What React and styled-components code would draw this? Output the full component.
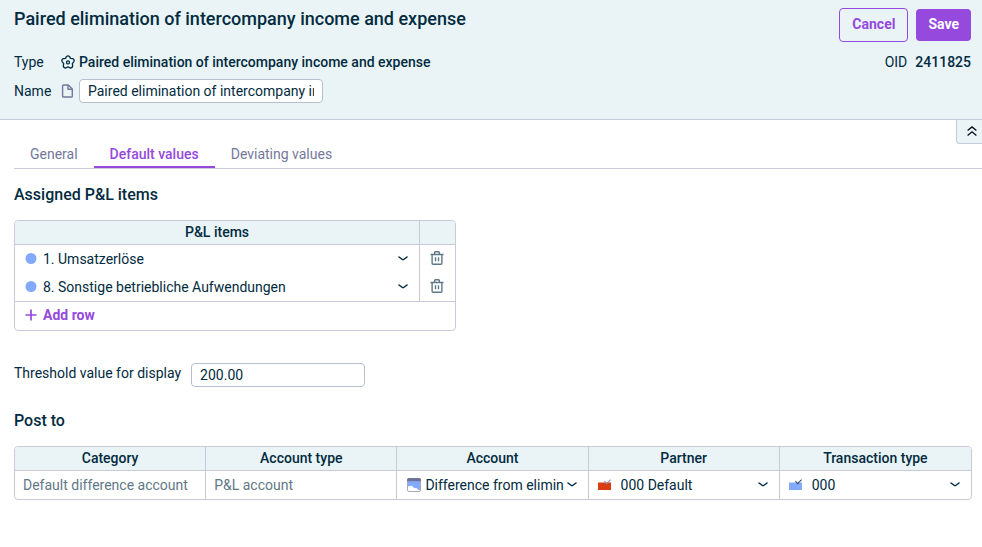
import { useState } from 'react'
import styled, { createGlobalStyle, ThemeProvider } from 'styled-components'

const theme = {
	text: '#022b40',
	muted: '#5f7886',
	tab: '#74789b',
	primary: '#9549dd',
	panel: '#eaf4f7',
	border: '#c8cada',
	headerBorder: '#c3cbd8',
	inputBorder: '#b6bfcf',
	blue: '#83aafa',
	red: '#d93d14',
}

const GlobalStyle = createGlobalStyle`
    * {
        box-sizing: border-box;
    }

    body {
        margin: 0;
        background-color: #fff;
        color: ${theme.text};
        font-family: Roboto, 'Liberation Sans', sans-serif;
        font-size: 14px;
        line-height: 20px;
    }

    button, input, select {
        font: inherit;
        color: inherit;
        margin: 0;
    }
`

const Header = styled.header`
    background-color: ${props => props.theme.panel};
    border-bottom: 1px solid ${props => props.theme.headerBorder};
    padding: 8px 11px 13px 14px;
`

const HeaderRow = styled.div`
    display: flex;
    justify-content: space-between;
    align-items: flex-start;
    margin-bottom: 6px;
`

const Title = styled.h1`
    margin: 0;
    font-size: 18px;
    font-weight: 500;
    line-height: 22px;
`

const ButtonGroup = styled.div`
    display: flex;
    align-items: center;
    gap: 8px;
`

const Button = styled.button`
    height: ${props => props.$primary ? '32px' : '34px'};
    padding: 0 12px 2px;
    border: ${props => props.$primary ? '0' : `1px solid ${props.theme.primary}`};
    border-radius: 4px;
    background-color: ${props => props.$primary ? props.theme.primary : 'transparent'};
    color: ${props => props.$primary ? '#fff' : props.theme.primary};
    font-weight: 700;
    cursor: pointer;
`

const MetaRow = styled.div`
    display: flex;
    align-items: center;
    height: ${props => props.$tall ? '30px' : '28px'};
`

const MetaLabel = styled.label`
    width: 47px;
`

const IconSlot = styled.span`
    display: flex;
    flex: none;
    width: ${props => props.$width || 18}px;
`

const Strong = styled.span`
    font-weight: 500;
`

const Oid = styled.div`
    display: flex;
    gap: 8px;
    margin-left: auto;
`

const TextInput = styled.input`
    width: ${props => props.$width}px;
    height: 24px;
    padding: 0 8px;
    border: 1px solid ${props => props.theme.inputBorder};
    border-radius: 4px;
    background-color: #fff;
`

const CollapseBar = styled.div`
    display: flex;
    justify-content: flex-end;
    height: 24px;
`

const CollapseButton = styled.button`
    display: flex;
    align-items: center;
    justify-content: center;
    width: 26px;
    padding: 0 0 2px 4px;
    border: solid ${props => props.theme.headerBorder};
    border-width: 0 0 1px 1px;
    border-radius: 0 0 0 4px;
    background-color: ${props => props.theme.panel};
    cursor: pointer;
`

const Tabs = styled.div.attrs({ role: 'tablist' })`
    display: flex;
    margin-left: 14px;
    border-bottom: 1px solid ${props => props.theme.border};
`

const Tab = styled.button.attrs({ role: 'tab' })`
    height: 24px;
    padding: 0 16px 2px;
    border: 0;
    border-bottom: 2px solid ${props => props.$active ? props.theme.primary : 'transparent'};
    background: none;
    color: ${props => props.$active ? props.theme.primary : props.theme.tab};
    font-weight: ${props => props.$active ? 500 : 400};
    cursor: pointer;
`

const Content = styled.main`
    padding: 16px 10px 16px 14px;
`

const SectionTitle = styled.h2`
    margin: 0 0 15px;
    font-size: 16px;
    font-weight: 500;
    line-height: 20px;
`

const Table = styled.table`
    width: ${props => props.$width || '100%'};
    table-layout: fixed;
    border: 1px solid ${props => props.theme.border};
    border-radius: 4px;
    border-spacing: 0;
    overflow: hidden;
`

const Th = styled.th`
    width: ${props => props.$width || 'auto'};
    height: 24px;
    padding: 0 0 2px;
    border-bottom: 1px solid ${props => props.theme.border};
    background-color: ${props => props.theme.panel};
    font-weight: 500;

    &:not(:last-child) {
        border-right: 1px solid ${props => props.theme.border};
    }
`

const Td = styled.td`
    height: 28px;
    padding: 0 8px;
    color: ${props => props.$muted ? props.theme.muted : 'inherit'};

    &:not(:last-child) {
        border-right: 1px solid ${props => props.theme.border};
    }
`

const FooterTd = styled.td`
    height: 29px;
    padding: 0 10px 2px;
    border-top: 1px solid ${props => props.theme.border};
`

const SelectBox = styled.div`
    display: flex;
    align-items: center;
    padding: 0 3px 0 ${props => props.$padded ? '2px' : '0'};
`

const Select = styled.select`
    appearance: none;
    flex: 1;
    min-width: 0;
    height: 24px;
    margin-right: 3px;
    padding: 0;
    border: 0;
    background: none;
    text-overflow: clip;
    cursor: pointer;
`

const IconButton = styled.button`
    display: flex;
    margin: 0 auto;
    padding: 0 1px 2px 0;
    border: 0;
    background: none;
    color: ${props => props.theme.muted};
    cursor: pointer;
`

const AddButton = styled.button`
    display: flex;
    align-items: center;
    gap: 6px;
    padding: 0;
    border: 0;
    background: none;
    color: ${props => props.theme.primary};
    font-weight: 700;
    cursor: pointer;
`

const Field = styled.div`
    display: flex;
    align-items: flex-start;
    gap: 10px;
    margin: 32px 0 24px;
`

const GearIcon = () => (
	<svg width='14' height='14' viewBox='0 0 14 14' fill='none' stroke='currentColor' strokeWidth='1.3' strokeLinejoin='round' aria-hidden='true'>
		<path d='M5.4 1.6Q7 .1 8.6 1.6L9.5 3.4L11.7 3.6Q13.7 4.6 12.9 6.6L11.3 8.6L11.7 10.8Q11.4 13 9.2 13L7 11.9L4.8 13Q2.6 13 2.3 10.8L2.7 8.6L1.1 6.6Q.3 4.6 2.3 3.6L4.5 3.4Z' />
		<circle cx='7' cy='7.4' r='1.5' />
	</svg>
)

const FileIcon = () => (
	<svg width='13' height='14' viewBox='0 0 13 14' fill='none' stroke='#74789b' strokeWidth='1.4' strokeLinejoin='round' aria-hidden='true'>
		<path d='M2.4 1H7.3L11.3 5V12.2Q11.3 13 10.5 13H2.4Q1.6 13 1.6 12.2V1.8Q1.6 1 2.4 1Z' />
		<path d='M7 1V5.2H11.3' />
	</svg>
)

const ChevronIcon = () => (
	<svg width='10' height='6' viewBox='0 0 10 6' fill='none' stroke='currentColor' strokeWidth='1.5' strokeLinecap='round' strokeLinejoin='round' aria-hidden='true'>
		<path d='M1 1L4.4 3.5Q5 3.9 5.6 3.5L9 1' />
	</svg>
)

const CollapseIcon = () => (
	<svg width='10' height='10' viewBox='0 0 10 10' fill='none' stroke='#000f18' strokeWidth='1.3' aria-hidden='true'>
		<path d='M.6 4.6L5 .9L9.4 4.6M.6 9.5L5 5.8L9.4 9.5' />
	</svg>
)

const DotIcon = () => (
	<svg width='12' height='12' viewBox='0 0 12 12' aria-hidden='true'>
		<circle cx='6' cy='5.5' r='5.5' fill={theme.blue} />
	</svg>
)

const TrashIcon = () => (
	<svg width='14' height='14' viewBox='0 0 14 14' fill='none' stroke='currentColor' strokeWidth='1.4' aria-hidden='true'>
		<path d='M.5 3.5H13.5M4.6 3.2V1.8Q4.6.8 5.6.8H8.4Q9.4.8 9.4 1.8V3.2M2.1 3.5V12.2Q2.1 13.2 3.1 13.2H10.9Q11.9 13.2 11.9 12.2V3.5M5.5 6.2V10.2M8.5 6.2V10.2' />
	</svg>
)

const PlusIcon = () => (
	<svg width='12' height='12' viewBox='0 0 12 12' stroke='currentColor' strokeWidth='1.7' aria-hidden='true'>
		<path d='M6 .5V11.5M.5 6H11.5' />
	</svg>
)

const AccountIcon = () => (
	<svg width='14' height='14' viewBox='0 0 14 14' aria-hidden='true'>
		<rect x='.5' y='.5' width='13' height='13' rx='1.5' fill='#fff' stroke='#a3adba' />
		<path d='M1 3H13V12Q11.4 12.2 10.6 11Q9.6 9.8 8 10.2Q6.8 10.2 6 8.8Q4.6 7.2 3.2 8Q2 8.4 1 8Z' fill={theme.blue} />
		<path d='M0 3.2V2Q0 0 2 0H12Q14 0 14 2V3.2Z' fill='#6f7396' />
	</svg>
)

const BoxIcon = ({ fill, check }) => (
	<svg width='15' height='12' viewBox='0 0 15 12' aria-hidden='true'>
		<path d='M1 3.4H14V11H1Z' fill={fill} />
		<path d='M7.4 2L9.7 4.6L13.6.6' fill='none' stroke={check} strokeWidth='1.1' />
	</svg>
)

const Dropdown = ({ label, icon, iconWidth, value, padded }) => (
	<SelectBox $padded={padded}>
		<IconSlot $width={iconWidth}>{icon}</IconSlot>
		<Select aria-label={label} defaultValue={value}>
			<option>{value}</option>
		</Select>
		<ChevronIcon />
	</SelectBox>
)

const tabs = ['General', 'Default values', 'Deviating values']

const items = ['1. Umsatzerlöse', '8. Sonstige betriebliche Aufwendungen']

const columns = ['Category', 'Account type', 'Account', 'Partner', 'Transaction type']

const name = 'Paired elimination of intercompany income and expense'

const App = () => {
	const [activeTab, setActiveTab] = useState('Default values')

	return (
		<ThemeProvider theme={theme}>
			<GlobalStyle />
			<Header>
				<HeaderRow>
					<Title>{name}</Title>
					<ButtonGroup>
						<Button type='button'>Cancel</Button>
						<Button type='button' $primary>Save</Button>
					</ButtonGroup>
				</HeaderRow>
				<MetaRow>
					<MetaLabel as='span'>Type</MetaLabel>
					<IconSlot><GearIcon /></IconSlot>
					<Strong>{name}</Strong>
					<Oid>
						<span>OID</span>
						<Strong>2411825</Strong>
					</Oid>
				</MetaRow>
				<MetaRow $tall>
					<MetaLabel htmlFor='name'>Name</MetaLabel>
					<IconSlot><FileIcon /></IconSlot>
					<TextInput id='name' type='text' defaultValue={name} $width={244} />
				</MetaRow>
			</Header>
			<CollapseBar>
				<CollapseButton type='button' aria-label='Collapse header'>
					<CollapseIcon />
				</CollapseButton>
			</CollapseBar>
			<Tabs>
				{tabs.map(tab => (
					<Tab
						key={tab}
						type='button'
						aria-selected={tab === activeTab}
						$active={tab === activeTab}
						onClick={() => setActiveTab(tab)}
					>
						{tab}
					</Tab>
				))}
			</Tabs>
			<Content>
				<SectionTitle>Assigned P&amp;L items</SectionTitle>
				<Table $width='442px'>
					<thead>
						<tr>
							<Th>P&amp;L items</Th>
							<Th $width='35px' />
						</tr>
					</thead>
					<tbody>
						{items.map(item => (
							<tr key={item}>
								<Td>
									<Dropdown label='P&L item' icon={<DotIcon />} value={item} padded />
								</Td>
								<Td>
									<IconButton type='button' aria-label='Delete row'>
										<TrashIcon />
									</IconButton>
								</Td>
							</tr>
						))}
						<tr>
							<FooterTd colSpan={2}>
								<AddButton type='button'>
									<PlusIcon />
									Add row
								</AddButton>
							</FooterTd>
						</tr>
					</tbody>
				</Table>
				<Field>
					<label htmlFor='threshold'>Threshold value for display</label>
					<TextInput id='threshold' type='text' defaultValue='200.00' $width={174} />
				</Field>
				<SectionTitle>Post to</SectionTitle>
				<Table>
					<thead>
						<tr>
							{columns.map(column => <Th key={column}>{column}</Th>)}
						</tr>
					</thead>
					<tbody>
						<tr>
							<Td $muted>Default difference account</Td>
							<Td $muted>P&amp;L account</Td>
							<Td>
								<Dropdown label='Account' icon={<AccountIcon />} value='Difference from elimination' padded />
							</Td>
							<Td>
								<Dropdown label='Partner' icon={<BoxIcon fill={theme.red} check='#8d8fa8' />} iconWidth={24} value='000 Default' />
							</Td>
							<Td>
								<Dropdown label='Transaction type' icon={<BoxIcon fill={theme.blue} check='#3c4a66' />} iconWidth={24} value='000' />
							</Td>
						</tr>
					</tbody>
				</Table>
			</Content>
		</ThemeProvider>
	)
}

export default App
